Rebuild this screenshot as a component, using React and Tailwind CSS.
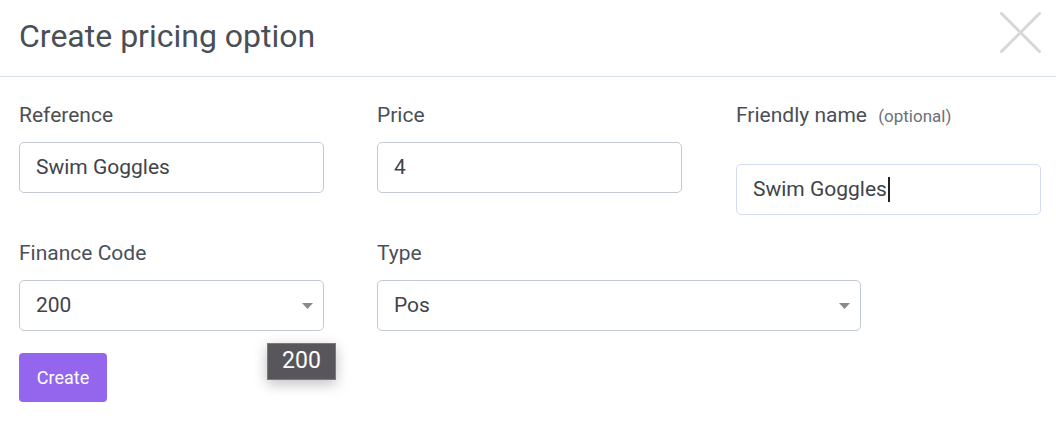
export default function App() {
  const label = "text-[21px] leading-[24px] text-[#4a4f57]";
  const input =
    "w-[305px] h-[51px] rounded-[5px] border border-[#c4cad2] bg-white flex items-center px-[16px] text-[21px] text-[#3f444b]";
  const Arrow = () => (
    <svg width="11" height="6" viewBox="0 0 11 6" className="ml-auto">
      <path d="M0 0 H11 L5.5 6 Z" fill="#8a8a8a" />
    </svg>
  );
  return (
    <div
      className="w-[1056px] h-[422px] bg-white relative overflow-hidden"
      style={{ fontFamily: "Roboto, 'Liberation Sans', sans-serif" }}
    >
      <div className="h-[77px] border-b border-[#d8dee6] flex items-center pl-[19px] pr-[15px]">
        <h1 className="text-[32px] text-[#4a4f57] leading-none -mt-[4px]">Create pricing option</h1>
        <svg width="41" height="41" viewBox="0 0 41 41" className="ml-auto -mt-[11px]">
          <path d="M1.5 1.5 L39.5 39.5 M39.5 1.5 L1.5 39.5" stroke="#d7d7d7" strokeWidth="3" strokeLinecap="round" />
        </svg>
      </div>

      <div className="px-[19px] pt-[26px]">
        <div className="grid grid-cols-[358px_359px_305px]">
          <div>
            <div className={label}>Reference</div>
            <div className={`${input} mt-[15px]`}>Swim Goggles</div>
          </div>
          <div>
            <div className={label}>Price</div>
            <div className={`${input} mt-[15px]`}>4</div>
          </div>
          <div>
            <div className={label}>
              Friendly name{" "}
              <span className="text-[17px] text-[#6b7079] ml-[6px]">(optional)</span>
            </div>
            <div className={`${input} mt-[36px] border-[#d2dcf2]`}>
              Swim Goggles
              <span className="inline-block w-[2px] h-[25px] bg-[#222] ml-[1px]" />
            </div>
          </div>
        </div>

        <div className="flex gap-x-[53px] mt-[26px]">
          <div className="w-[305px]">
            <div className={label}>Finance Code</div>
            <div className={`${input} mt-[15px] pr-[10px]`}>
              200
              <Arrow />
            </div>
          </div>
          <div className="w-[484px]">
            <div className={label}>Type</div>
            <div className={`${input} !w-[484px] mt-[15px] pr-[10px]`}>
              Pos
              <Arrow />
            </div>
          </div>
        </div>

        <button className="mt-[22px] w-[88px] h-[49px] rounded-[4px] bg-[#9466ee] text-white text-[18px] flex items-center justify-center">
          Create
        </button>
      </div>

      <div className="absolute left-[267px] top-[343px] w-[69px] h-[37px] bg-[#58565b] border border-[#7a7a7c] text-white text-[23px] flex items-center justify-center shadow-[0_4px_14px_rgba(0,0,0,0.25)]">
        200
      </div>
    </div>
  );
}
